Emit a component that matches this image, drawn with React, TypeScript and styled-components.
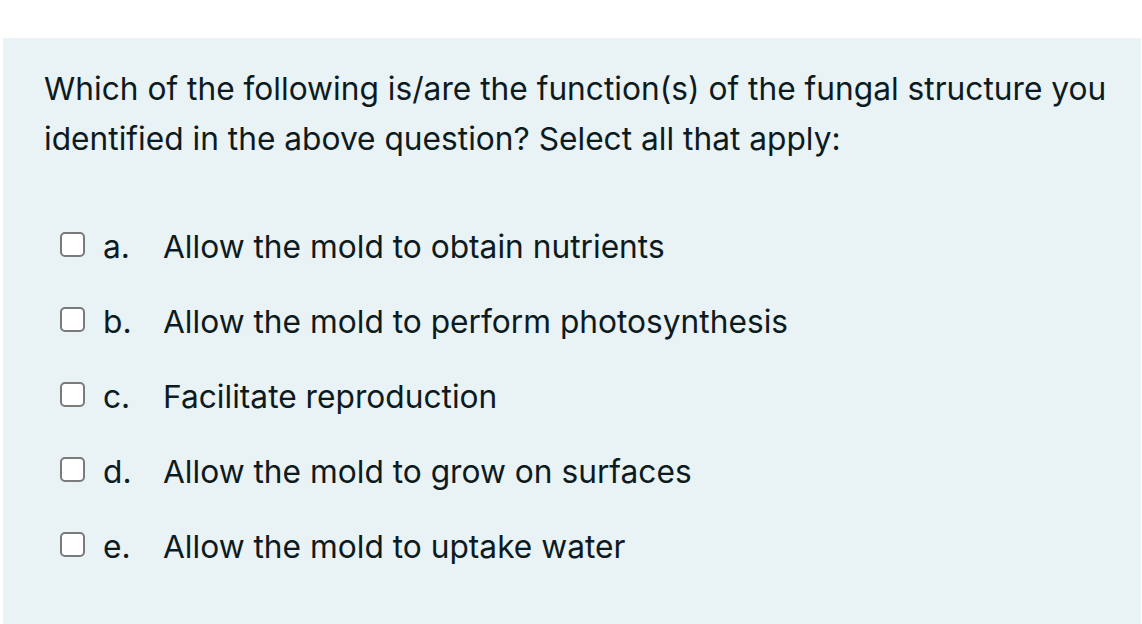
import React from "react";
import styled, { createGlobalStyle } from "styled-components";

const Global = createGlobalStyle`
  body {
    margin: 0;
    background: #fff;
    font-family: Inter, "Noto Sans", sans-serif;
    color: #0d1b21;
  }
`;

const Panel = styled.div`
  box-sizing: border-box;
  margin: 38px 1px 0 3px;
  height: 586px;
  background: #e9f2f5;
  padding: 26px 0 0 41px;
`;

const Question = styled.p`
  margin: 0;
  font-size: 31.7px;
  line-height: 50px;
  max-width: 1090px;
`;

const Options = styled.ul`
  list-style: none;
  margin: 62px 0 0;
  padding: 0 0 0 16px;
  display: flex;
  flex-direction: column;
  gap: 35px;
`;

const Option = styled.li`
  display: flex;
  align-items: center;
  height: 40px;
  font-size: 31.7px;
`;

const Box = styled.span`
  box-sizing: border-box;
  width: 25px;
  height: 25px;
  margin-bottom: 4px;
  border: 2px solid #7a7a7a;
  border-radius: 5px;
  background: #fff;
  flex: none;
`;

const Letter = styled.span`
  width: 60px;
  margin-left: 18px;
`;

const options = [
  ["a.", "Allow the mold to obtain nutrients"],
  ["b.", "Allow the mold to perform photosynthesis"],
  ["c.", "Facilitate reproduction"],
  ["d.", "Allow the mold to grow on surfaces"],
  ["e.", "Allow the mold to uptake water"],
];

export default function App() {
  return (
    <>
      <Global />
      <Panel>
        <Question>
          Which of the following is/are the function(s) of the fungal structure you
          identified in the above question? Select all that apply:
        </Question>
        <Options>
          {options.map(([letter, text]) => (
            <Option key={letter}>
              <Box />
              <Letter>{letter}</Letter>
              <span>{text}</span>
            </Option>
          ))}
        </Options>
      </Panel>
    </>
  );
}
